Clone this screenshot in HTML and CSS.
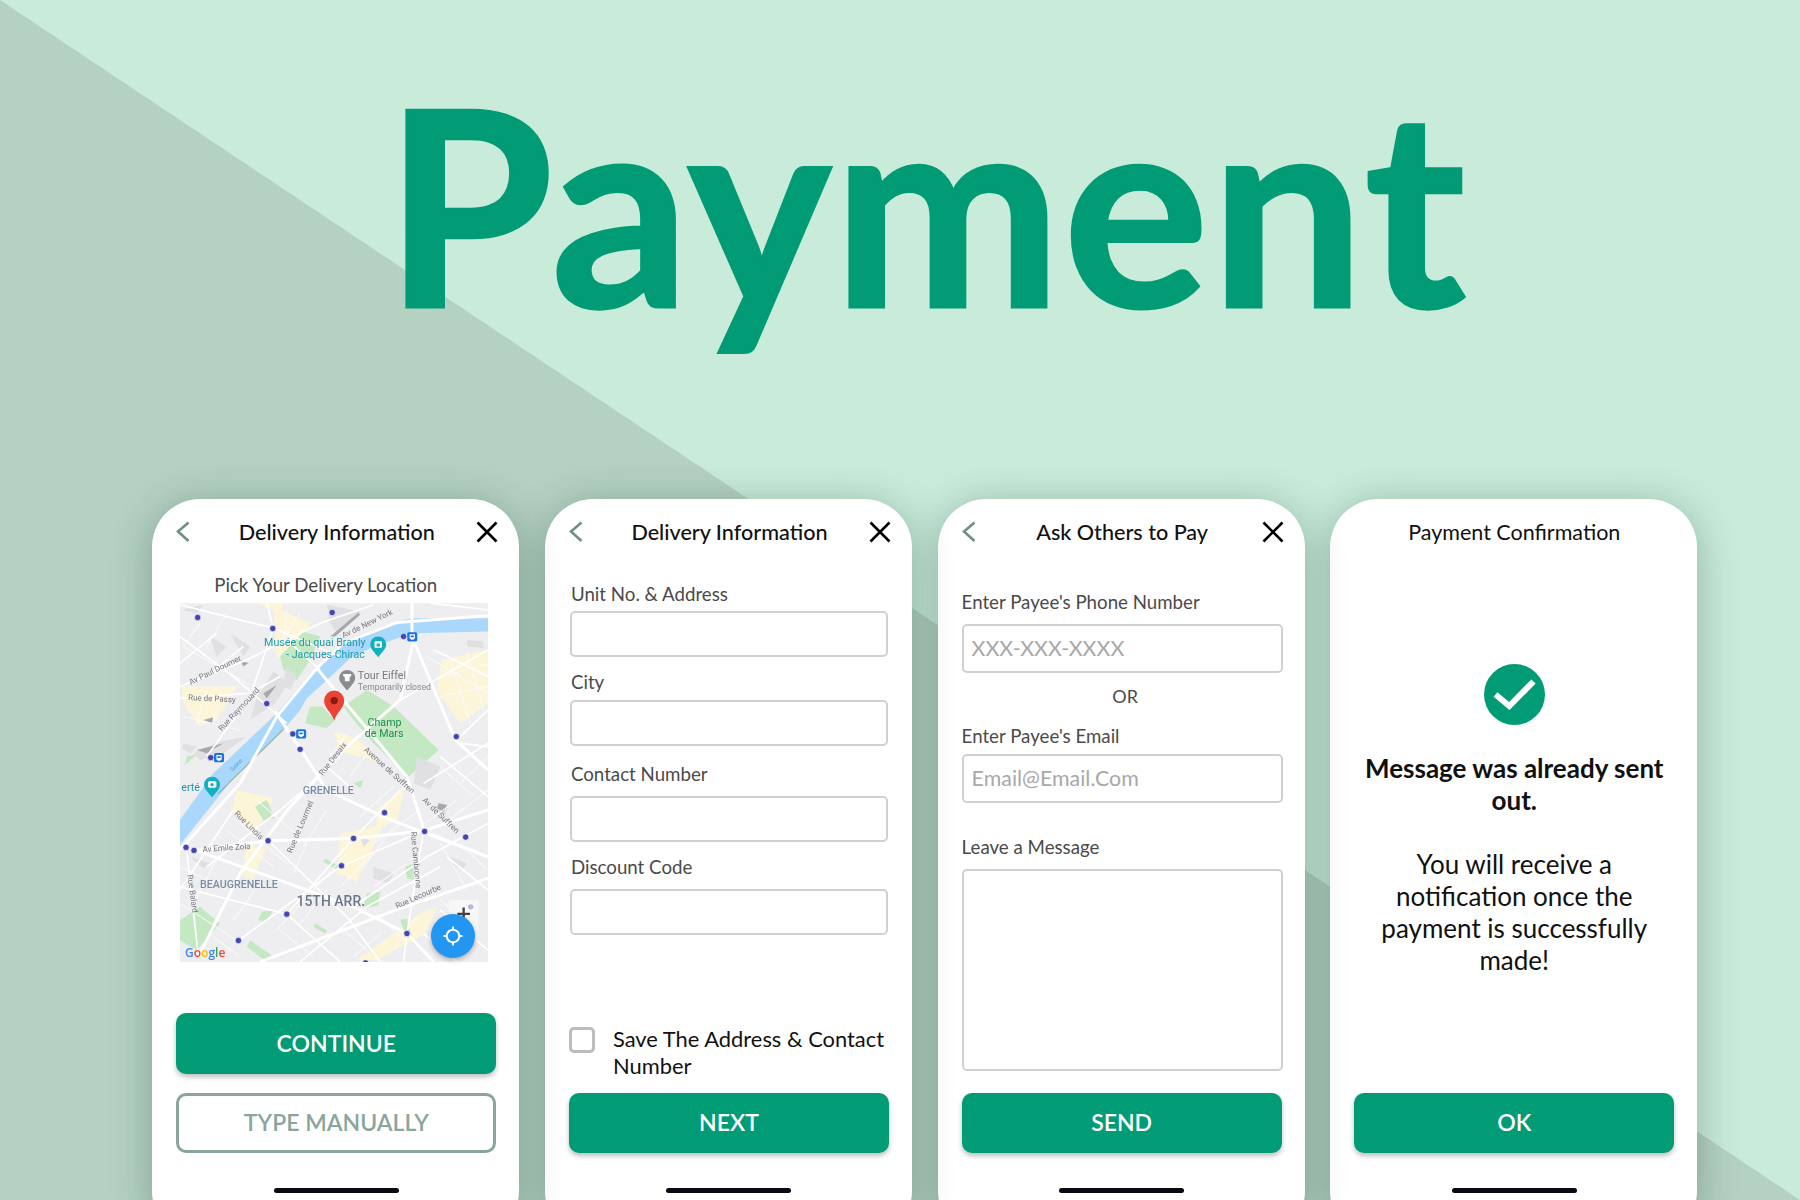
FILE: index.html
```html
<!DOCTYPE html>
<html lang="en">
<head>
    <meta charset="UTF-8">
    <meta name="viewport" content="width=device-width, initial-scale=1.0">
    <title>Payment</title>
    <link rel="stylesheet" href="styles.css">
</head>
<body>
    <div id="page">
        <h1 id="hero-title">Payment</h1>

        <div id="screens">
            <!-- Map screen -->
            <section class="phone phone-map">
                <div class="topbar">
                    <svg class="icon-back" width="14" height="22" viewBox="0 0 14 22"><path d="M12.5 1.5 L2 10.5 L12.5 20"/></svg>
                    <h2 class="topbar-title">Delivery Information</h2>
                    <svg class="icon-close" width="22" height="22" viewBox="0 0 22 22"><path d="M1.5 1.5 L20.5 20.5 M20.5 1.5 L1.5 20.5"/></svg>
                </div>
                <p class="map-title">Pick Your Delivery Location</p>
                <div class="map-box">
                    <svg class="map-svg" width="308" height="359" viewBox="120 340 923 1075">
                        <rect class="m-land" x="120" y="340" width="923" height="1075"/>

                        <!-- housing blocks -->
                        <g class="m-yellow">
                            <path d="M905 510 L1043 480 L1043 640 L960 700 L890 600 Z"/>
                            <path d="M400 350 L510 400 L470 480 L410 510 Z"/>
                            <path d="M125 590 L290 590 L230 690 L180 710 L130 640 Z"/>
                            <path d="M580 725 L650 745 L720 815 L600 785 Z"/>
                            <path d="M290 900 L400 925 L345 1030 L275 960 Z"/>
                            <path d="M600 1030 L730 1005 L650 1175 L590 1150 Z"/>
                            <path d="M320 1065 L375 1075 L340 1170 L305 1155 Z"/>
                            <path d="M715 955 L795 890 L770 990 L705 1020 Z"/>
                            <path d="M840 1270 L890 1250 L855 1330 L710 1410 L650 1410 Z"/>
                            <path d="M350 340 L430 340 L420 370 Z"/>
                        </g>

                        <!-- parks -->
                        <g class="m-green">
                            <path d="M610 650 L680 600 L760 650 L895 780 L805 860 L700 760 L640 690 Z"/>
                            <path d="M495 700 L510 650 L545 650 L585 690 L560 715 Z"/>
                            <path d="M420 500 L490 425 L540 440 L510 510 L470 570 L430 540 Z"/>
                            <path d="M120 1290 L180 1250 L240 1300 L170 1380 L120 1350 Z"/>
                            <path d="M345 950 L380 930 L405 985 L370 990 Z"/>
                            <path d="M680 1210 L720 1205 L715 1245 L670 1255 Z"/>
                            <path d="M795 1130 L820 1120 L820 1170 L800 1165 Z"/>
                            <path d="M555 1105 L600 1130 L590 1140 L550 1115 Z"/>
                            <path d="M365 1265 L400 1260 L380 1295 L355 1290 Z"/>
                            <path d="M330 1350 L400 1400 L380 1415 L320 1370 Z"/>
                            <path d="M640 880 L670 870 L660 895 Z"/>
                            <path d="M140 800 L175 790 L135 825 Z"/>
                            <path d="M780 1290 L800 1285 L815 1340 L800 1345 Z"/>
                            <path d="M525 1300 L560 1320 L555 1330 L520 1310 Z"/>
                        </g>

                        <!-- relief and buildings -->
                        <g class="m-relief">
                            <path d="M400 545 L445 580 L405 640 L330 690 L350 625 Z"/>
                            <path d="M440 530 L470 560 L450 600 L425 585 Z"/>
                            <path d="M160 790 L240 755 L320 740 L250 790 L180 810 Z"/>
                            <path d="M125 360 L190 345 L170 370 Z"/>
                            <path d="M560 345 L660 365 L590 430 L570 400 Z"/>
                            <path d="M130 760 L170 770 L150 790 L125 775 Z"/>
                            <path d="M270 430 L330 470 L310 500 Z"/>
                            <path d="M900 940 L925 945 L915 975 L890 965 Z"/>
                            <path d="M930 1100 L980 1120 L965 1140 L930 1120 Z"/>
                            <path d="M660 1040 L690 1050 L670 1070 Z"/>
                            <path d="M150 1100 L210 1120 L190 1135 Z"/>
                            <path d="M700 1130 L760 1150 L745 1180 L700 1165 Z"/>
                            <path d="M830 800 L900 830 L870 900 L820 880 Z"/>
                            <path d="M210 440 L260 470 L230 500 Z"/>
                            <path d="M980 450 L1030 455 L1030 475 L980 470 Z"/>
                        </g>
                        <g class="m-dark">
                            <path d="M370 610 L410 585 L380 625 Z"/>
                            <path d="M170 780 L250 760 L200 790 Z"/>
                            <path d="M570 440 L655 368 L660 375 L585 440 Z"/>
                            <path d="M300 510 L325 520 L310 530 Z"/>
                            <path d="M190 690 L220 682 L215 700 Z"/>
                            <path d="M895 940 L920 945 L910 965 L890 955 Z"/>
                        </g>

                        <!-- river -->
                        <path class="m-water" d="M120 990 L220 850 L410 670 L530 530 L610 455 L770 395 L815 385 L1043 385 L1043 425 L815 430 L700 470 L630 505 L550 580 L500 625 L480 660 L430 720 L275 870 L120 1065 Z"/>
                        <path class="m-island" d="M235 910 L430 718"/>

                        <!-- minor streets -->
                        <g class="m-road-thin">
                            <path d="M860 500 L1043 610"/>
                            <path d="M880 570 L1043 520"/>
                            <path d="M900 620 L1043 590"/>
                            <path d="M930 510 L990 700"/>
                            <path d="M980 490 L1030 660"/>
                            <path d="M130 470 L320 580"/>
                            <path d="M180 400 L130 470"/>
                            <path d="M260 370 L200 470"/>
                            <path d="M130 680 L300 720"/>
                            <path d="M200 600 L170 700"/>
                            <path d="M250 590 L220 690"/>
                            <path d="M440 360 L430 480"/>
                            <path d="M480 370 L400 480"/>
                            <path d="M590 750 L700 800"/>
                            <path d="M620 730 L570 800"/>
                            <path d="M680 790 L630 860"/>
                            <path d="M760 890 L660 980"/>
                            <path d="M840 960 L700 1060"/>
                            <path d="M950 930 L840 1010"/>
                            <path d="M1043 900 L900 1010"/>
                            <path d="M900 830 L1000 920"/>
                            <path d="M1043 800 L960 880"/>
                            <path d="M300 1000 L440 1120"/>
                            <path d="M350 930 L500 1060"/>
                            <path d="M260 1020 L400 1130"/>
                            <path d="M500 1060 L460 1150"/>
                            <path d="M560 960 L490 1070"/>
                            <path d="M620 1090 L520 1200"/>
                            <path d="M700 1090 L600 1190"/>
                            <path d="M740 1040 L670 1130"/>
                            <path d="M800 1120 L700 1190"/>
                            <path d="M900 1060 L980 1200"/>
                            <path d="M960 1060 L1040 1140"/>
                            <path d="M120 1130 L260 1200"/>
                            <path d="M120 1240 L290 1350"/>
                            <path d="M230 1110 L160 1240"/>
                            <path d="M300 1160 L220 1300"/>
                            <path d="M360 1180 L280 1290"/>
                            <path d="M500 1220 L410 1320"/>
                            <path d="M560 1200 L480 1300"/>
                            <path d="M420 1320 L520 1400"/>
                            <path d="M600 1310 L680 1380"/>
                            <path d="M700 1260 L780 1340"/>
                            <path d="M900 1230 L970 1290"/>
                            <path d="M720 1330 L640 1400"/>
                            <path d="M830 1280 L760 1380"/>
                            <path d="M300 1400 L220 1340"/>
                        </g>

                        <!-- main roads -->
                        <g class="m-road-big">
                            <path d="M120 1080 L300 880 L410 680 L530 535 L610 460 L770 398 L1043 378"/>
                            <path d="M815 340 L815 440 L945 750 L1043 840"/>
                            <path d="M820 450 L780 630 L620 770 L450 950 L300 1150 L175 1400"/>
                            <path d="M405 665 L480 775 L560 900 L740 985 L1043 1100"/>
                            <path d="M530 535 L800 860 L853 1025 L1043 1100"/>
                            <path d="M160 1078 L640 1250 L800 1330 L880 1415"/>
                            <path d="M160 1082 L385 1052 L640 1045 L850 1022 L1043 960"/>
                            <path d="M360 1415 L760 1262 L1043 1165"/>
                        </g>
                        <g class="m-road">
                            <path d="M120 345 L400 415 L600 500"/>
                            <path d="M380 340 L400 415 L330 620 L200 800"/>
                            <path d="M120 590 L320 510 L540 400 L700 345"/>
                            <path d="M120 625 L330 610 L420 560"/>
                            <path d="M120 440 L280 560 L440 700"/>
                            <path d="M230 430 L120 520"/>
                            <path d="M140 1080 L175 1400"/>
                            <path d="M950 750 L1043 660"/>
                            <path d="M780 630 L1043 480"/>
                            <path d="M880 480 L1043 560"/>
                            <path d="M960 760 L1043 770"/>
                            <path d="M850 880 L1043 760"/>
                            <path d="M900 800 L1043 920"/>
                            <path d="M640 1250 L860 1100 L1043 1000"/>
                            <path d="M385 1052 L620 1280 L720 1415"/>
                            <path d="M440 1272 L640 1045 L800 880"/>
                            <path d="M295 1351 L600 1130 L850 1022"/>
                            <path d="M850 1022 L800 1330 L790 1415"/>
                            <path d="M480 1415 L680 1250 L900 1130"/>
                            <path d="M120 1190 L440 1272 L600 1415"/>
                            <path d="M280 960 L120 1200"/>
                            <path d="M200 1130 L420 960"/>
                            <path d="M400 980 L600 800"/>
                            <path d="M560 830 L640 900"/>
                            <path d="M900 1260 L1043 1380"/>
                            <path d="M1043 1200 L920 1100"/>
                            <path d="M850 1330 L950 1415"/>
                            <path d="M200 560 L310 470"/>
                            <path d="M440 450 L540 540"/>
                            <path d="M870 340 L1043 360"/>
                        </g>

                        <!-- street labels -->
                        <g class="m-label">
                            <text x="152" y="585" transform="rotate(-26 152 585)">Av Paul Doumer</text>
                            <text x="144" y="630" transform="rotate(3 144 630)">Rue de Passy</text>
                            <text x="245" y="725" transform="rotate(-47 245 725)">Rue Raymouard</text>
                            <text x="610" y="445" transform="rotate(-26 610 445)">Av de New York</text>
                            <text x="548" y="858" transform="rotate(-52 548 858)">Rue Desaix</text>
                            <text x="670" y="782" transform="rotate(42 670 782)">Avenue de Suffren</text>
                            <text x="845" y="932" transform="rotate(44 845 932)">Av de Suffren</text>
                            <text x="282" y="972" transform="rotate(45 282 972)">Rue Linois</text>
                            <text x="188" y="1086" transform="rotate(-4 188 1086)">Av Emile Zola</text>
                            <text x="455" y="1090" transform="rotate(-67 455 1090)">Rue de Lourmel</text>
                            <text x="812" y="1025" transform="rotate(85 812 1025)">Rue Cambronne</text>
                            <text x="142" y="1155" transform="rotate(82 142 1155)">Rue Balard</text>
                            <text x="770" y="1256" transform="rotate(-24 770 1256)">Rue Lecourbe</text>
                            <text class="m-seine" x="278" y="845" transform="rotate(-46 278 845)">Seine</text>
                        </g>
                        <text class="m-area" x="488" y="911">GRENELLE</text>
                        <text class="m-area" x="180" y="1194">BEAUGRENELLE</text>
                        <text class="m-area m-area-big" x="469" y="1248">15TH ARR.</text>
                        <text class="m-poi-teal" x="372" y="467">Musée du quai Branly</text>
                        <text class="m-poi-teal" x="438" y="503">- Jacques Chirac</text>
                        <text class="m-poi-gray" x="653" y="568">Tour Eiffel</text>
                        <text class="m-poi-small" x="653" y="600">Temporarily closed</text>
                        <text class="m-poi-green" x="682" y="707">Champ</text>
                        <text class="m-poi-green" x="674" y="742">de Mars</text>
                        <text class="m-poi-teal" x="124" y="904">erté</text>

                        <!-- metro stops -->
                        <g class="m-metro">
                            <circle cx="173" cy="383" r="9.5"/><circle cx="398" cy="416" r="9.5"/>
                            <circle cx="576" cy="368" r="9.5"/><circle cx="380" cy="641" r="9.5"/>
                            <circle cx="480" cy="778" r="9.5"/><circle cx="948" cy="740" r="9.5"/>
                            <circle cx="733" cy="968" r="9.5"/><circle cx="853" cy="1024" r="9.5"/>
                            <circle cx="976" cy="1041" r="9.5"/><circle cx="640" cy="1045" r="9.5"/>
                            <circle cx="384" cy="1052" r="9.5"/><circle cx="604" cy="1127" r="9.5"/>
                            <circle cx="440" cy="1272" r="9.5"/><circle cx="295" cy="1351" r="9.5"/>
                            <circle cx="800" cy="1330" r="9.5"/><circle cx="162" cy="1081" r="9.5"/>
                            <circle cx="138" cy="1072" r="9.5"/><circle cx="790" cy="440" r="9.5"/>
                            <circle cx="458" cy="732" r="9.5"/><circle cx="212" cy="803" r="9.5"/>
                            <circle cx="676" cy="1418" r="9.5"/>
                        </g>
                        <g class="m-bus">
                            <rect x="801" y="427" width="30" height="28" rx="5"/>
                            <rect x="468" y="718" width="30" height="28" rx="5"/>
                            <rect x="222" y="789" width="30" height="28" rx="5"/>
                        </g>
                        <g class="m-bus-in">
                            <path d="M808 433 H824 V447 H820 V450 H812 V447 H808 Z"/>
                            <path d="M475 724 H491 V738 H487 V741 H479 V738 H475 Z"/>
                            <path d="M229 795 H245 V809 H241 V812 H233 V809 H229 Z"/>
                        </g>
                        <g class="m-bus">
                            <rect x="811" y="437" width="10" height="5"/>
                            <rect x="478" y="728" width="10" height="5"/>
                            <rect x="232" y="799" width="10" height="5"/>
                        </g>

                        <!-- poi pins -->
                        <path class="m-pin-teal" d="M714 502 C704 488 690 478 690 464 A24 24 0 0 1 738 464 C738 478 724 488 714 502 Z"/>
                        <rect class="m-pin-in" x="703" y="454" width="22" height="20" rx="3"/>
                        <rect class="m-pin-teal" x="709" y="461" width="10" height="9"/>
                        <path class="m-pin-teal" d="M216 922 C206 908 192 898 192 884 A24 24 0 0 1 240 884 C240 898 226 908 216 922 Z"/>
                        <rect class="m-pin-in" x="204" y="874" width="25" height="19" rx="4"/>
                        <circle class="m-pin-teal" cx="216" cy="884" r="5"/>
                        <path class="m-pin-gray" d="M621 602 C611 588 597 578 597 564 A24 24 0 0 1 645 564 C645 578 631 588 621 602 Z"/>
                        <path class="m-pin-in" d="M609 552 H633 V558 L628 562 V574 H614 V562 L609 558 Z"/>

                        <!-- selected location -->
                        <path class="m-pin-red" d="M582 692 C572 664 552 655 552 632 A30 30 0 0 1 612 632 C612 655 592 664 582 692 Z"/>
                        <circle class="m-pin-dot" cx="582" cy="632" r="11"/>

                        <!-- zoom control -->
                        <rect class="m-zoom" x="925" y="1230" width="90" height="120"/>
                        <path class="m-plus" d="M970 1252 V1290 M951 1271 H989"/>
                        <circle class="m-zoom-dot" cx="991" cy="1250" r="8"/>

                        <text class="m-google" x="135" y="1401"><tspan class="g-blue">G</tspan><tspan class="g-red">o</tspan><tspan class="g-yellow">o</tspan><tspan class="g-blue">g</tspan><tspan class="g-green">l</tspan><tspan class="g-red">e</tspan></text>
                    </svg>
                    <div class="locate-btn">
                        <svg width="20" height="20" viewBox="0 0 20 20"><circle cx="10" cy="10" r="6.3"/><path d="M10 0.5 V4 M10 16 V19.5 M0.5 10 H4 M16 10 H19.5"/></svg>
                    </div>
                </div>
                <div class="actions">
                    <button class="btn btn-tall">CONTINUE</button>
                    <button class="btn btn-outline">TYPE MANUALLY</button>
                </div>
                <div class="home-bar"></div>
            </section>

            <!-- Address form -->
            <section class="phone phone-delivery">
                <div class="topbar">
                    <svg class="icon-back" width="14" height="22" viewBox="0 0 14 22"><path d="M12.5 1.5 L2 10.5 L12.5 20"/></svg>
                    <h2 class="topbar-title">Delivery Information</h2>
                    <svg class="icon-close" width="22" height="22" viewBox="0 0 22 22"><path d="M1.5 1.5 L20.5 20.5 M20.5 1.5 L1.5 20.5"/></svg>
                </div>
                <form class="form">
                    <div class="field"><label>Unit No. &amp; Address</label><input type="text" class="input"></div>
                    <div class="field"><label>City</label><input type="text" class="input"></div>
                    <div class="field"><label>Contact Number</label><input type="text" class="input"></div>
                    <div class="field"><label>Discount Code</label><input type="text" class="input"></div>
                </form>
                <div class="actions">
                    <div class="save-row">
                        <span class="checkbox"></span>
                        <span class="save-text">Save The Address &amp; Contact Number</span>
                    </div>
                    <button class="btn">NEXT</button>
                </div>
                <div class="home-bar"></div>
            </section>

            <!-- Ask others -->
            <section class="phone phone-ask">
                <div class="topbar">
                    <svg class="icon-back" width="14" height="22" viewBox="0 0 14 22"><path d="M12.5 1.5 L2 10.5 L12.5 20"/></svg>
                    <h2 class="topbar-title">Ask Others to Pay</h2>
                    <svg class="icon-close" width="22" height="22" viewBox="0 0 22 22"><path d="M1.5 1.5 L20.5 20.5 M20.5 1.5 L1.5 20.5"/></svg>
                </div>
                <form class="form">
                    <div class="field"><label>Enter Payee's Phone Number</label><input type="text" class="input" placeholder="XXX-XXX-XXXX"></div>
                    <p class="or-text">OR</p>
                    <div class="field"><label>Enter Payee's Email</label><input type="text" class="input" placeholder="Email@Email.Com"></div>
                    <div class="field"><label>Leave a Message</label><textarea class="input message-box"></textarea></div>
                </form>
                <div class="actions">
                    <button class="btn">SEND</button>
                </div>
                <div class="home-bar"></div>
            </section>

            <!-- Confirmation -->
            <section class="phone phone-confirm">
                <div class="topbar">
                    <h2 class="topbar-title">Payment Confirmation</h2>
                </div>
                <svg class="check-icon" width="61" height="61" viewBox="0 0 61 61">
                    <circle cx="30.5" cy="30.5" r="30.5"/>
                    <path d="M11.5 30.5 L25.3 42 L49.5 17.5"/>
                </svg>
                <p class="confirm-head">Message was already sent out.</p>
                <p class="confirm-text">You will receive a notification once the payment is successfully made!</p>
                <div class="actions">
                    <button class="btn">OK</button>
                </div>
                <div class="home-bar"></div>
            </section>
        </div>
    </div>
</body>
</html>
```

FILE: styles.css
```css
html, body {
    margin: 0;
    height: 1200px;
    overflow: hidden;
}
body {
    font-family: Lato, "Open Sans", sans-serif;
}
#page {
    width: 1800px;
    height: 1200px;
    overflow: hidden;
    background: linear-gradient(to top right, #b5d1c2 50%, #c9ebda 50%);
}

#hero-title {
    margin: 0;
    height: 499px;
    padding-left: 385px;
    box-sizing: border-box;
    padding-top: 52px;
    font-size: 272px;
    letter-spacing: 2.2px;
    line-height: 300px;
    font-weight: 700;
    color: #019b75;
    -webkit-text-stroke: 3px #019b75;
}

#screens {
    display: flex;
    gap: 25.67px;
    padding-left: 152.3px;
}

.phone {
    position: relative; /* z-index only: each screen throws its shadow on the next */
    flex: none;
    display: flex;
    flex-direction: column;
    box-sizing: border-box;
    width: 367px;
    height: 740px;
    padding: 20px 23px 46px 24px;
    border-radius: 48px;
    background: #fff;
    box-shadow: 0 6px 40px rgba(10, 50, 35, 0.3);
}
.phone-map { z-index: 4; }
.phone-delivery { z-index: 3; }
.phone-ask { z-index: 2; }
.phone-confirm { z-index: 1; }

.topbar {
    display: flex;
    align-items: center;
    height: 26px;
}
.topbar-title {
    flex: 1;
    margin: 0;
    font-size: 21.6px;
    font-weight: 500;
    line-height: 26px;
    text-align: center;
    color: #111;
}
.phone-confirm .topbar-title {
    font-size: 21.5px;
    font-weight: 400;
}
.icon-back {
    margin-right: 7px;
}
.icon-back path {
    fill: none;
    stroke: #6f9085;
    stroke-width: 2.6;
}
.icon-close {
    margin-right: -2px;
}
.icon-close path {
    fill: none;
    stroke: #000;
    stroke-width: 2.6;
}

/* map */
.map-title {
    margin: 28px 0 6px 38px;
    font-size: 18.7px;
    line-height: 24px;
    color: #4a4a4a;
}
.map-box {
    position: relative;
    width: 308px;
    height: 359px;
    margin-left: 4px;
}
.map-svg {
    display: block;
    filter: blur(0.35px);
}
.locate-btn {
    position: absolute;
    left: 251px;
    top: 311px;
    width: 44px;
    height: 44px;
    display: flex;
    align-items: center;
    justify-content: center;
    border-radius: 50%;
    background: #2196f3;
    box-shadow: 0 2px 5px rgba(0, 0, 0, 0.3);
}
.locate-btn circle, .locate-btn path {
    fill: none;
    stroke: #fff;
    stroke-width: 2;
}

.m-land { fill: #eeeef0; }
.m-yellow path { fill: #fdf5d8; }
.m-green path { fill: #c3e8c2; }
.m-relief path { fill: #e0e0e3; }
.m-dark path { fill: #a8a8ac; }
.m-water { fill: #a9d8fc; }
.m-island { fill: none; stroke: #8fb08c; stroke-width: 3; }
.m-road-big path { fill: none; stroke: #fff; stroke-width: 9; }
.m-road path { fill: none; stroke: #fff; stroke-width: 5; }
.m-road-thin path { fill: none; stroke: #fafafb; stroke-width: 3; }
.m-label text {
    font-family: Roboto, sans-serif;
    font-size: 24px;
    fill: #757780;
}
.m-label .m-seine { font-size: 18px; fill: #5c9fd6; }
.m-area {
    font-family: Roboto, sans-serif;
    font-size: 32px;
    font-weight: 500;
    fill: #7c8aa4;
}
.m-area-big {
    font-size: 42px;
    fill: #6d7688;
}
.m-poi-teal { font-family: Roboto, sans-serif; font-size: 32px; fill: #1a9ca6; }
.m-poi-gray { font-family: Roboto, sans-serif; font-size: 32px; fill: #75787d; }
.m-poi-small { font-family: Roboto, sans-serif; font-size: 26px; fill: #85888d; }
.m-poi-green { font-family: Roboto, sans-serif; font-size: 32px; fill: #1e8e4e; }
rect.m-pin-teal, circle.m-pin-teal, .m-pin-teal { fill: #15b0c0; }
.m-metro circle { fill: #4444b4; stroke: #fff; stroke-width: 2; }
.m-bus rect { fill: #1a73e8; }
.m-bus-in path { fill: #fff; }
.m-pin-gray { fill: #8a8d92; }
.m-pin-in { fill: #fff; }
.m-pin-red { fill: #ea4335; }
.m-pin-dot { fill: #8c1a12; }
.m-zoom { fill: #f7f7f8; }
.m-plus { fill: none; stroke: #444; stroke-width: 7; }
.m-zoom-dot { fill: #b5b5e0; }
.m-google { font-family: "Open Sans", sans-serif; font-size: 36px; font-weight: 600; }
.g-blue { fill: #4285f4; }
.g-red { fill: #ea4335; }
.g-yellow { fill: #fbbc05; }
.g-green { fill: #34a853; }

/* forms */
.form {
    display: flex;
    flex-direction: column;
}
.field {
    display: flex;
    flex-direction: column;
}
.field label {
    font-size: 18.7px;
    line-height: 24px;
    color: #4a4a4a;
}
.input {
    box-sizing: border-box;
    padding: 0 8px 2px;
    border: 2px solid #d0d0d0;
    border-radius: 5px;
    font-family: inherit;
    font-size: 21.4px;
    background: #fff;
    outline: none;
    resize: none;
}
.input::placeholder {
    color: #a8a8a8;
    opacity: 1;
}

.phone-delivery .form { margin-top: 37px; margin-left: 1px; }
.phone-delivery .field label { margin-left: 1px; }
.phone-delivery .input {
    width: 318px;
    height: 46px;
}
.phone-delivery .field:nth-child(1) label { margin-bottom: 5px; }
.phone-delivery .field:nth-child(2) { margin-top: 13px; }
.phone-delivery .field:nth-child(2) label { margin-bottom: 6px; }
.phone-delivery .field:nth-child(3) { margin-top: 16px; }
.phone-delivery .field:nth-child(3) label { margin-bottom: 10px; }
.phone-delivery .field:nth-child(4) { margin-top: 13px; }
.phone-delivery .field:nth-child(4) label { margin-bottom: 10px; }

.phone-ask .form { margin-top: 45px; }
.phone-ask .input {
    width: 321px;
    height: 49px;
}
.phone-ask .field label { margin-bottom: 10px; }
.phone-ask .field:nth-child(3) { margin-top: 17px; }
.phone-ask .field:nth-child(3) label { margin-bottom: 6px; }
.phone-ask .field:nth-child(4) { margin-top: 32px; }
.phone-ask .message-box { height: 202px; }
.or-text {
    margin: 12px 0 0 7px;
    font-size: 18px;
    line-height: 22px;
    text-align: center;
    color: #4a4a4a;
}

.save-row {
    display: flex;
    align-items: flex-start;
    margin-bottom: 14px;
}
.checkbox {
    flex: none;
    box-sizing: border-box;
    width: 26px;
    height: 26px;
    margin-top: 2px;
    border: 3px solid #bcbcbc;
    border-radius: 5px;
}
.save-text {
    margin-left: 18px;
    font-size: 21.9px;
    line-height: 27px;
    color: #111;
}

/* buttons */
.actions {
    margin-top: auto;
    display: flex;
    flex-direction: column;
}
.btn {
    box-sizing: border-box;
    width: 320px;
    height: 60px;
    padding: 0 0 2px;
    border: none;
    border-radius: 10px;
    background: #019b75;
    color: #fff;
    font-family: inherit;
    font-size: 23px;
    font-weight: 600;
    box-shadow: 0 3px 5px rgba(0, 0, 0, 0.25);
}
.btn-tall {
    height: 61px;
    margin-bottom: 19px;
}
.btn-outline {
    border: 3px solid #8aa69a;
    background: #fff;
    color: #8aa69a;
    box-shadow: none;
}
.home-bar {
    width: 125px;
    height: 5px;
    margin: 35px auto 0;
    border-radius: 3px;
    background: #0a0a14;
}

/* confirmation */
.check-icon {
    display: block;
    margin: 119px auto 0;
}
.check-icon circle { fill: #019b75; }
.check-icon path {
    fill: none;
    stroke: #fff;
    stroke-width: 6;
}
.confirm-head {
    margin: 27px 0 0;
    font-size: 26px;
    font-weight: 700;
    line-height: 32px;
    text-align: center;
    color: #111;
}
.confirm-text {
    margin: 32px 20px 0;
    font-size: 26px;
    line-height: 32px;
    text-align: center;
    color: #111;
}
```
